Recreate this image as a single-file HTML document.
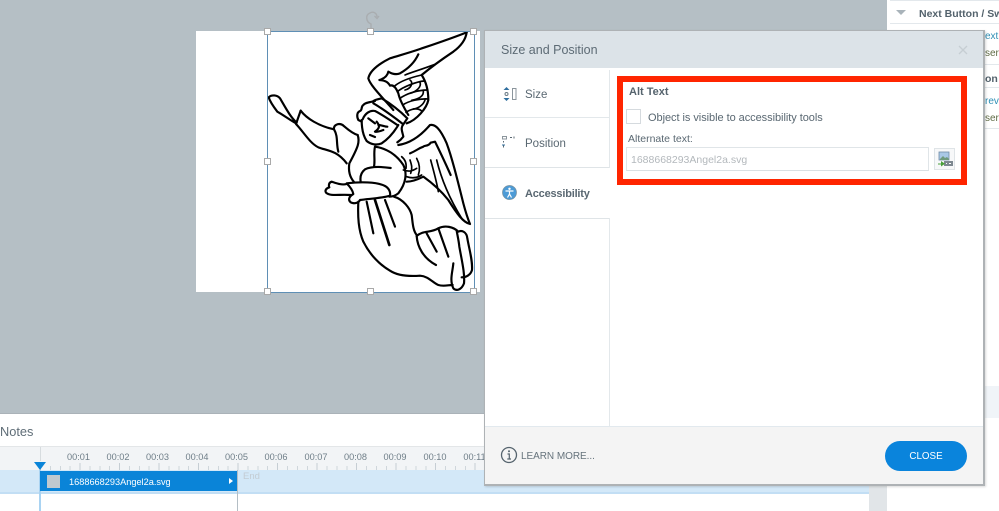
<!DOCTYPE html>
<html lang="en"><head><meta charset="utf-8"><title>Size and Position</title>
<style>
html,body{margin:0;padding:0}
body{width:999px;height:511px;position:relative;overflow:hidden;background:#fff;font-family:"Liberation Sans",sans-serif;color:#5a6872}
.a{position:absolute}
.t{position:absolute;white-space:nowrap;line-height:14px}
.h{position:absolute;width:5px;height:5px;background:#fff;border:1px solid #a9a9a9}
.tk{position:absolute;font-size:9.2px;color:#6f7e88;top:452px;width:40px;text-align:center}
</style></head><body>
<div class="a" style="left:0;top:0;width:999px;height:413px;background:#b5bfc5"></div>
<div class="a" style="left:0;top:413px;width:887px;height:1px;background:#aab2b8"></div>

<!-- right panel -->
<div class="a" style="left:887px;top:0;width:112px;height:413px;background:#fff"></div>
<div class="a" style="left:890px;top:0;width:109px;height:1px;background:#e3e8ec"></div>
<div class="a" style="left:890px;top:23px;width:109px;height:1px;background:#e3e8ec"></div>
<div class="a" style="left:890px;top:64px;width:109px;height:1px;background:#e3e8ec"></div>
<div class="a" style="left:890px;top:87px;width:109px;height:1px;background:#e3e8ec"></div>
<div class="a" style="left:890px;top:128px;width:109px;height:1px;background:#e3e8ec"></div>
<div class="a" style="left:896px;top:10px;width:0;height:0;border-left:5px solid transparent;border-right:5px solid transparent;border-top:5px solid #a9b3ba"></div>
<div class="t" style="left:919px;top:7px;font-size:10.5px;font-weight:700;color:#53626c">Next Button / Sw</div>
<div class="t" style="left:985px;top:30px;font-size:10px;color:#2f8fb5">ext</div>
<div class="t" style="left:985px;top:47px;font-size:10px;color:#5f6b45">ser o</div>
<div class="t" style="left:985px;top:72px;font-size:10.5px;font-weight:700;color:#53626c">on /</div>
<div class="t" style="left:985px;top:95px;font-size:10px;color:#2f8fb5">rev</div>
<div class="t" style="left:985px;top:112px;font-size:10px;color:#5f6b45">ser o</div>
<div class="a" style="left:985px;top:386px;width:14px;height:32px;background:#f0f4f8"></div>

<!-- slide -->
<div class="a" style="left:196px;top:31px;width:284px;height:261px;background:#fff"></div>
<svg class="a" style="left:190px;top:0" width="300" height="300" viewBox="0 0 900 900" fill="none" stroke="#000" stroke-width="6.5" stroke-linecap="round" stroke-linejoin="round">
<g transform="translate(390,75)">
<path d="M440 22C395 40 350 55 300 72C265 84 235 92 210 100C180 115 150 135 145 160C150 180 185 215 220 255"/>
<path d="M440 22C437 45 420 65 400 80C370 100 335 125 305 150C318 170 325 195 325 225C320 250 290 285 260 295"/>
<path d="M295 88C285 110 270 128 240 145C228 150 215 146 205 140C203 150 195 160 178 165C190 166 203 168 210 182C220 178 228 188 235 205C238 220 250 245 265 270"/>
<path d="M255 150C280 140 300 135 345 118" stroke-width="5"/>
<path d="M225 182C240 170 270 158 305 150M232 200C250 185 290 170 312 168M240 220C260 205 295 195 322 195M248 240C265 228 300 220 325 222M258 262C275 250 295 248 305 258" stroke-width="5"/>
<path d="M270 165C280 172 275 190 255 195M300 172C305 185 290 200 270 205M310 198C312 215 295 222 275 226M315 225C310 240 295 250 280 252" stroke-width="5"/>
<path d="M160 228C170 222 178 222 185 220C210 235 240 258 262 280L250 298C220 275 190 252 160 235Z"/>
<path d="M165 228C150 232 135 232 130 240C122 245 128 255 120 258C110 262 110 275 115 285L125 290"/>
<path d="M250 298C240 310 248 322 250 335C245 342 238 348 232 352"/>
<path d="M125 285C125 310 128 330 140 348C152 358 170 362 185 355C200 345 220 325 235 300"/>
<path d="M128 283C135 265 150 255 165 258C185 268 210 285 232 300"/>
<path d="M145 280L165 295M175 300C185 300 192 305 202 305M170 290C178 300 182 308 165 320C172 322 182 318 190 315M150 330L165 336"/>
</g>
<path d="M625 435C660 430 690 410 720 375C735 372 750 385 770 430C785 470 800 530 820 610C828 640 835 660 840 672C820 668 800 640 775 600C755 575 735 555 700 530C680 540 665 545 650 545"/>
<path d="M660 460C680 452 685 445 700 440C705 435 715 440 722 428L735 425C745 445 755 465 782 525"/>
<path d="M722 480C730 510 740 545 745 575M740 480C752 530 775 590 815 655" stroke-width="5"/>
<path d="M635 470C645 478 650 490 648 505M660 480C665 495 668 505 662 520M680 475C688 490 692 505 685 525M640 510C655 515 665 515 680 505M650 530C665 535 680 535 695 525" stroke-width="5"/>
<path d="M320 368C300 350 285 320 270 295C262 285 245 283 236 292C240 305 252 322 262 335C280 345 300 360 318 370"/>
<path d="M332 332L318 372C340 395 360 430 385 442C410 452 440 450 470 490"/>
<path d="M332 332C350 355 385 378 432 388C430 375 445 368 458 375C470 385 485 400 503 405"/>
<path d="M432 388C445 410 438 430 445 455M503 405C510 425 505 440 478 490C475 510 478 530 492 546"/>
<path d="M555 440C590 445 620 465 640 495C652 520 648 550 625 580C615 588 605 590 598 590"/>
<path d="M555 440C550 460 556 480 552 500M602 504C575 500 545 498 525 508C512 518 510 532 512 545"/>
<path d="M470 550C510 545 560 545 585 558C598 565 602 578 600 587C570 596 535 596 510 600C505 610 490 612 482 607C474 600 476 590 490 582C488 570 478 558 470 550Z"/>
<path d="M470 552C455 556 440 550 425 545C415 548 416 558 418 562C408 565 404 572 408 578C420 590 450 582 482 585"/>
<path d="M505 605C503 650 505 690 520 725C540 765 570 795 600 812C620 825 650 830 690 827C715 828 730 850 745 855C760 860 775 855 788 855"/>
<path d="M612 590C640 598 660 625 665 645C668 665 668 690 680 705"/>
<path d="M530 605L550 700"/><path d="M555 600L598 735" stroke-width="8"/><path d="M585 600L615 680"/>
<path d="M680 708C700 690 720 700 745 685C765 675 790 680 805 695C815 690 830 695 832 715C838 750 848 780 846 810C842 825 828 832 815 832"/>
<path d="M680 708C682 740 700 775 738 795M710 700L740 755M745 685L775 770"/>
<path d="M790 790C788 815 778 840 790 865C800 875 815 868 822 850C825 820 815 780 808 740C806 720 802 705 800 692"/>
</svg>
<!-- selection -->
<div class="a" style="left:267px;top:31px;width:206px;height:260px;border:1px solid #5f8fb5"></div>
<svg class="a" style="left:362px;top:8px" width="18" height="24" viewBox="0 0 18 24" fill="none" stroke="#a9adb0" stroke-width="1.4"><path d="M9 22V16C4 14 3 7 8 5C11 3 15 5 15 9"/><path d="M12.500 8L15 10.500L17 8"/></svg>
<div class="h" style="left:264px;top:28px"></div><div class="h" style="left:367px;top:28px"></div><div class="h" style="left:470px;top:28px"></div>
<div class="h" style="left:264px;top:158px"></div><div class="h" style="left:470px;top:158px"></div>
<div class="h" style="left:264px;top:288px"></div><div class="h" style="left:367px;top:288px"></div><div class="h" style="left:470px;top:288px"></div>

<!-- timeline -->
<div class="t" style="left:0;top:425px;font-size:12.800px;color:#5f6d77">Notes</div>
<div class="a" style="left:0;top:446px;width:887px;height:24px;background:#f2f4f6;border-top:1px solid #e3e6e8;box-sizing:border-box"></div>
<div class="a" style="left:0;top:470px;width:869px;height:24px;background:#d3e8f8;border-bottom:2px solid #c2def4;box-sizing:border-box"></div>
<div class="a" style="left:869px;top:486px;width:18px;height:25px;background:#e1e5e8"></div>
<div class="tk" style="left:58.500px">00:01</div><div class="tk" style="left:98px">00:02</div><div class="tk" style="left:137.500px">00:03</div><div class="tk" style="left:177px">00:04</div><div class="tk" style="left:216.500px">00:05</div><div class="tk" style="left:256px">00:06</div><div class="tk" style="left:296px">00:07</div><div class="tk" style="left:335.500px">00:08</div><div class="tk" style="left:375px">00:09</div><div class="tk" style="left:415px">00:10</div><div class="tk" style="left:454.500px">00:11</div>
<div class="a" style="left:40px;top:466px;width:445px;height:4px;background:repeating-linear-gradient(90deg,#cfd6db 0 1px,transparent 1px 9.88px)"></div>
<div class="a" style="left:40px;top:463px;width:445px;height:7px;background:repeating-linear-gradient(90deg,#c6ced4 0 1px,transparent 1px 39.5px)"></div>
<div class="a" style="left:40px;top:447px;width:1px;height:14px;background:#d7dcdf"></div>
<div class="a" style="left:39px;top:470px;width:2px;height:41px;background:#a9d3f2"></div>
<div class="a" style="left:34px;top:462px;width:0;height:0;border-left:6.500px solid transparent;border-right:6.500px solid transparent;border-top:8px solid #0a84d8"></div>
<div class="a" style="left:237px;top:470px;width:1px;height:41px;background:#b4bec5"></div>
<div class="a" style="left:40px;top:471px;width:197px;height:20px;background:#0a84d8"></div>
<div class="a" style="left:47px;top:475px;width:13px;height:13px;background:#c0c9cf"></div>
<div class="t" style="left:69px;top:475px;font-size:9.200px;color:#fff">1688668293Angel2a.svg</div>
<div class="a" style="left:229px;top:478px;width:0;height:0;border-left:4px solid #fff;border-top:3.500px solid transparent;border-bottom:3.500px solid transparent"></div>
<div class="t" style="left:243px;top:470px;font-size:9.500px;color:#c3ccd3">End</div>

<!-- dialog -->
<div class="a" style="left:484px;top:30px;width:501px;height:456px;box-sizing:border-box;background:#fff;border:1px solid #aeb2b5;border-right:2px solid #aeb2b5;border-bottom:2px solid #aeb2b5;box-shadow:1px 1px 2px rgba(0,0,0,.15)"></div>
<div class="a" style="left:485px;top:31px;width:498px;height:37px;background:#dce3e8"></div>
<div class="t" style="left:501px;top:43px;font-size:12.500px;color:#5d6b75">Size and Position</div>
<svg class="a" style="left:958px;top:45px" width="10" height="10" viewBox="0 0 10 10" stroke="#c6ced3" stroke-width="1.300"><path d="M1 1L9 9M9 1L1 9"/></svg>

<div class="a" style="left:485px;top:117px;width:124px;height:1px;background:#e3e8eb"></div>
<div class="a" style="left:485px;top:167px;width:125px;height:1px;background:#dfe4e7"></div>
<div class="a" style="left:485px;top:218px;width:125px;height:1px;background:#dfe4e7"></div>
<div class="a" style="left:609px;top:70px;width:1px;height:98px;background:#e3e8eb"></div>
<div class="a" style="left:609px;top:218px;width:1px;height:209px;background:#e3e8eb"></div>

<svg class="a" style="left:502px;top:85px" width="18" height="18" viewBox="0 0 18 18"><path d="M4.500 2L7.500 5H1.500ZM4.500 16L7.500 13H1.500Z" fill="#2f6f9f"/><circle cx="4.500" cy="9" r="1.500" fill="none" stroke="#6b7b86"/><rect x="10.500" y="3.500" width="3.500" height="11" fill="none" stroke="#8b959c"/></svg>
<div class="t" style="left:525px;top:88px;font-size:11.500px">Size</div>
<svg class="a" style="left:501px;top:134px" width="16" height="16" viewBox="0 0 16 16"><rect x="1.500" y="2.500" width="4" height="2.500" fill="none" stroke="#8b959c"/><path d="M9 3.500h2M13 2.500v2" stroke="#5a6872"/><path d="M2.500 7v1.500M2.500 10.500v3" stroke="#5a6872"/><path d="M1 11h3" stroke="#2f6f9f"/></svg>
<div class="t" style="left:525px;top:137px;font-size:11.500px">Position</div>
<svg class="a" style="left:502px;top:185px" width="15" height="15" viewBox="0 0 15 15"><circle cx="7.500" cy="7.500" r="7" fill="#4d9bd6" stroke="#76909f" stroke-width=".7"/><circle cx="7.500" cy="3.800" r="1.200" fill="#fff"/><path d="M3.500 6H11.500M7.500 6V9M7.500 9L5.500 12.500M7.500 9L9.500 12.500" stroke="#fff" stroke-width="1.200" fill="none"/></svg>
<div class="t" style="left:525px;top:187px;font-size:11px;font-weight:700;letter-spacing:-.2px">Accessibility</div>

<div class="a" style="left:617px;top:76px;width:350px;height:109px;box-sizing:border-box;border:6px solid #ff2500"></div>
<div class="t" style="left:629px;top:85px;font-size:11px;font-weight:700;color:#56646e">Alt Text</div>
<div class="a" style="left:626px;top:109px;width:15px;height:15px;box-sizing:border-box;border:1px solid #d5dade;background:#fff"></div>
<div class="t" style="left:648px;top:111px;font-size:11px;letter-spacing:-.05px">Object is visible to accessibility tools</div>
<div class="t" style="left:628px;top:132px;font-size:10.500px">Alternate text:</div>
<div class="a" style="left:626px;top:147px;width:303px;height:24px;box-sizing:border-box;border:1px solid #e0e5e8;border-bottom:1.500px solid #d9e0e4;background:#fff"></div>
<div class="t" style="left:631px;top:153px;font-size:10.500px;color:#b3b8bc">1688668293Angel2a.svg</div>
<div class="a" style="left:934px;top:148px;width:21px;height:22px;box-sizing:border-box;border:1px solid #dfe4e7;background:#f7f8f9"></div>
<svg class="a" style="left:937px;top:151px" width="16" height="16" viewBox="0 0 16 16"><rect x="2" y="1" width="10" height="8" fill="#a9c8e6" stroke="#6f8ba6" stroke-width=".8"/><path d="M3 8l3-3 2 2 2-1 2 2v1H3z" fill="#6f9a7c"/><rect x="7" y="10" width="9" height="5" fill="#7d8890"/><path d="M9 12.500h1M12 12.500h2" stroke="#fff"/><path d="M1 12.500h3V10l4 2.700-4 2.800v-2H1z" fill="#4aa03a"/></svg>

<div class="a" style="left:485px;top:426px;width:498px;height:1px;background:#e2e9ee"></div>
<div class="a" style="left:485px;top:427px;width:498px;height:57px;background:#f4f4f4"></div>
<svg class="a" style="left:500px;top:446px" width="18" height="18" viewBox="0 0 18 18"><circle cx="9" cy="9" r="7.500" fill="none" stroke="#56646e" stroke-width="1.300"/><circle cx="9" cy="5.300" r="1" fill="#56646e"/><path d="M7.500 8H9.300V12.500M7.300 13H11" fill="none" stroke="#56646e" stroke-width="1.200"/></svg>
<div class="t" style="left:521px;top:450px;font-size:10px;letter-spacing:-.05px;color:#66737c">LEARN MORE...</div>
<div class="a" style="left:885px;top:441px;width:82px;height:30px;border-radius:15px;background:#0a84dc;color:#fff;font-size:9.800px;line-height:32px;text-align:center">CLOSE</div>
</body></html>
